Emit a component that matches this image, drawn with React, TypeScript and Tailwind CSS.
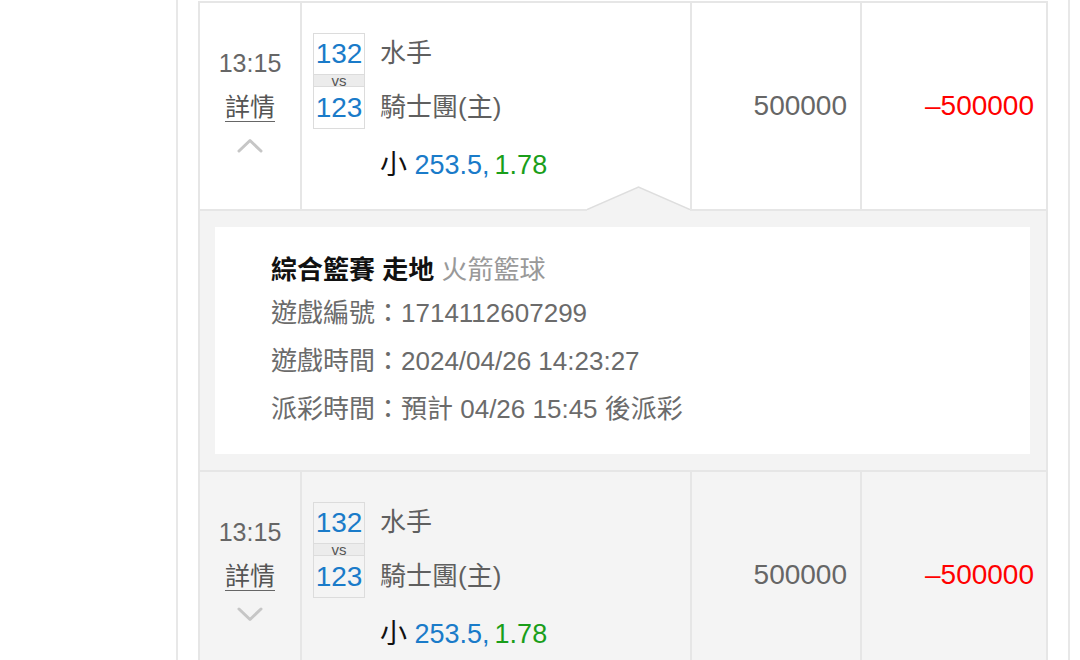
interface Bet {
  time: string
  awayScore: string
  homeScore: string
  away: string
  home: string
  side: string
  line: string
  odds: string
  stake: string
  result: string
}

const bets: Bet[] = [
  {
    time: '13:15',
    awayScore: '132',
    homeScore: '123',
    away: '水手',
    home: '騎士團(主)',
    side: '小',
    line: '253.5,',
    odds: '1.78',
    stake: '500000',
    result: '–500000',
  },
  {
    time: '13:15',
    awayScore: '132',
    homeScore: '123',
    away: '水手',
    home: '騎士團(主)',
    side: '小',
    line: '253.5,',
    odds: '1.78',
    stake: '500000',
    result: '–500000',
  },
]

function Chevron({ up }: { up: boolean }) {
  return (
    <svg className="mt-[16px] h-[15px] w-[26px]" viewBox="0 0 26 15" fill="none">
      <polyline
        points={up ? '2,13 13,2.5 24,13' : '2,2 13,12.5 24,2'}
        stroke="#c6c6c6"
        strokeWidth="3"
        strokeLinecap="round"
        strokeLinejoin="round"
      />
    </svg>
  )
}

function BetRow({ bet, open, shaded }: { bet: Bet; open: boolean; shaded: boolean }) {
  return (
    <div
      className={`relative flex border-b-2 border-[#e6e6e6] ${shaded ? 'bg-[#f4f4f4]' : 'bg-white'}`}
    >
      <div className="flex w-[102px] shrink-0 flex-col items-center border-r-2 border-[#e6e6e6] pt-[45px]">
        <span className="text-[25px] leading-[30px] text-[#666]">{bet.time}</span>
        <span className="mt-[14px] text-[25px] leading-[30px] text-[#555] underline decoration-[#666] decoration-1 underline-offset-[5px]">
          詳情
        </span>
        <Chevron up={open} />
      </div>

      <div className="w-[390px] shrink-0 border-r-2 border-[#e6e6e6] pl-[11px] pt-[30px] pb-[26px]">
        <div className="flex gap-[15px]">
          <div className="flex w-[52px] flex-col border border-[#dcdcdc] text-center">
            <span className="h-[40px] text-[28px] leading-[40px] text-[#1a7bc9]">{bet.awayScore}</span>
            <span className="h-[13px] border-y border-[#dcdcdc] bg-[#ececec] text-[15px] leading-[11px] text-[#555]">
              vs
            </span>
            <span className="h-[41px] text-[28px] leading-[41px] text-[#1a7bc9]">{bet.homeScore}</span>
          </div>
          <div className="flex flex-col text-[26px] text-[#5f5f5f]">
            <span className="h-[41px] leading-[41px]">{bet.away}</span>
            <span className="h-[13px]" />
            <span className="h-[41px] leading-[41px]">{bet.home}</span>
          </div>
        </div>
        <div className="mt-[18px] pl-[67px] text-[27px] leading-[36px]">
          <span className="text-[#111]">{bet.side}</span>{' '}
          <span className="text-[#1a7bc9]">{bet.line}</span>
          <span className="ml-[5px] text-[#1a9e1a]">{bet.odds}</span>
        </div>
      </div>

      <div className="flex w-[170px] shrink-0 items-center justify-end border-r-2 border-[#e6e6e6] pr-[13px]">
        <span className="text-[28px] text-[#666]">{bet.stake}</span>
      </div>

      <div className="flex flex-1 items-center justify-end pr-[12px]">
        <span className="text-[28px] text-[#ff0000]">{bet.result}</span>
      </div>

      {open && (
        <svg
          className="absolute bottom-[-2px] left-[387px] h-[25px] w-[103px]"
          viewBox="0 0 103 25"
        >
          <polygon points="0,24 51.5,1 103,24 103,25 0,25" fill="#f3f3f3" />
          <polyline points="0,23.5 51.5,1 103,23.5" fill="none" stroke="#dedede" strokeWidth="1.6" />
        </svg>
      )}
    </div>
  )
}

function BetDetail() {
  return (
    <div className="border-b-2 border-[#e6e6e6] bg-[#f3f3f3] pl-[15px] pr-[16px] py-[16px]">
      <div className="bg-white pl-[56px] pt-[24px] pb-[21px] text-[26px]">
        <p className="leading-[38px]">
          <span className="font-bold text-[#111]">綜合籃賽 走地</span>{' '}
          <span className="text-[#999]">火箭籃球</span>
        </p>
        <p className="leading-[48px] text-[#6b6b6b]">遊戲編號：1714112607299</p>
        <p className="leading-[48px] text-[#6b6b6b]">遊戲時間：2024/04/26 14:23:27</p>
        <p className="leading-[48px] text-[#6b6b6b]">派彩時間：預計 04/26 15:45 後派彩</p>
      </div>
    </div>
  )
}

export default function App() {
  return (
    <div className="h-[660px] overflow-hidden bg-white font-['Liberation_Sans','Noto_Sans_CJK_TC',sans-serif]">
      <div className="ml-[176px] w-[894px] border-x-2 border-[#e8e8e8] px-[20px] pt-[1px]">
        <div className="border-x-2 border-t-2 border-[#e6e6e6]">
          <BetRow bet={bets[0]} open shaded={false} />
          <BetDetail />
          <BetRow bet={bets[1]} open={false} shaded />
        </div>
      </div>
    </div>
  )
}
